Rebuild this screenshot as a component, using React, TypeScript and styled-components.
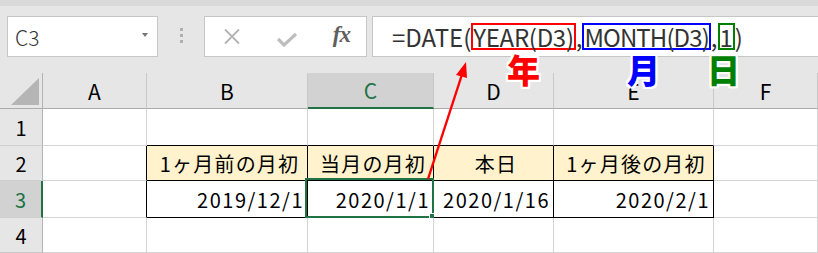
import React from "react";
import styled, { createGlobalStyle } from "styled-components";

const GREEN = "#217346";
const GRID = "#d4d4d4";
const INK = "#000";

const GlobalStyle = createGlobalStyle`
  html, body {
    margin: 0;
    padding: 0;
    background: #e6e6e6;
    overflow: hidden;
  }
  body {
    font-family: "Noto Sans CJK JP", "Noto Sans", sans-serif;
  }
`;

const Frame = styled.div`
  position: relative;
  width: 818px;
  height: 253px;
  overflow: hidden;
  background: #e6e6e6;
`;

const TopEdge = styled.div`
  height: 6px;
  background: #d9d9d9;
`;

const FormulaBar = styled.div`
  display: flex;
  align-items: center;
  height: 41px;
  padding: 10px 0 16px 7px;
`;

const Box = styled.div`
  box-sizing: border-box;
  height: 41px;
  background: #fff;
  border: 1px solid #c6c6c6;
  display: flex;
  align-items: center;
`;

const NameBox = styled(Box)`
  width: 151px;
  padding: 0 9px 0 7px;
  justify-content: space-between;
  font-size: 21px;
  font-weight: 300;
  color: #333;
`;

const DropArrow = styled.span`
  width: 0;
  height: 0;
  border-left: 3.5px solid transparent;
  border-right: 3.5px solid transparent;
  border-top: 4px solid #777;
  margin-top: -4px;
`;

const Grip = styled.div`
  width: 46px;
  display: flex;
  flex-direction: column;
  align-items: center;
  gap: 3px;
  margin-top: -2px;

  span {
    width: 3px;
    height: 3px;
    background: #b0b0b0;
  }
`;

const ButtonBox = styled(Box)`
  width: 163px;
  padding: 0 16px 0 18px;
  justify-content: space-between;
`;

const Fx = styled.span`
  font-family: "Liberation Serif", serif;
  font-style: italic;
  font-weight: bold;
  font-size: 23px;
  color: #5f5f5f;
  letter-spacing: -1px;
  margin-top: -4px;
`;

const FormulaBox = styled(Box)`
  flex: 1;
  margin-left: 5px;
  margin-right: -10px;
  padding-left: 19px;
  font-size: 24px;
  color: #333;
  white-space: nowrap;
`;

const Mark = styled.span<{ $c: string; $ls?: number }>`
  display: inline-block;
  border: 2px solid ${(p) => p.$c};
  line-height: 23px;
  letter-spacing: ${(p) => p.$ls ?? 0}px;
`;

const Sheet = styled.div`
  display: grid;
  grid-template-columns: 43px 104px 161px 126px 120px 160px 1fr;
  grid-template-rows: 36px 37px 35px 37px 35px;
  background: #fff;
`;

const Cell = styled.div<{
  $bg?: string;
  $align?: string;
  $right?: string;
  $bottom?: string;
  $num?: boolean;
}>`
  position: relative;
  box-sizing: border-box;
  display: flex;
  align-items: center;
  justify-content: ${(p) => p.$align || "flex-start"};
  padding: 0 3px 0 8px;
  background: ${(p) => p.$bg || "#fff"};
  border-right: 1px solid ${(p) => p.$right || GRID};
  border-bottom: 1px solid ${(p) => p.$bottom || GRID};
  font-size: 20px;
  letter-spacing: ${(p) => (p.$num ? 1.5 : 1.2)}px;
  color: #000;
  white-space: nowrap;
`;

const Head = styled.div<{ $sel?: boolean; $row?: boolean; $last?: boolean }>`
  position: relative;
  box-sizing: border-box;
  display: flex;
  align-items: center;
  justify-content: center;
  background: ${(p) => (p.$sel ? "#d2d2d2" : "#e6e6e6")};
  color: ${(p) => (p.$sel ? GREEN : "#000")};
  font-size: ${(p) => (p.$row ? 20 : 21)}px;
  border-right: ${(p) =>
    p.$row
      ? p.$sel
        ? `2px solid ${GREEN}`
        : "1px solid #b4b4b4"
      : "1px solid #c8c8c8"};
  border-bottom: ${(p) =>
    p.$row
      ? `1px solid ${p.$last ? "#c8c8c8" : "#cfcfcf"}`
      : p.$sel
      ? `2px solid ${GREEN}`
      : "1px solid #ababab"};
`;

const Corner = styled.div`
  box-sizing: border-box;
  display: flex;
  align-items: flex-end;
  justify-content: flex-end;
  padding: 0 3px 3px 0;
  background: #e6e6e6;
  border-right: 1px solid #b4b4b4;
  border-bottom: 1px solid #ababab;

  &::after {
    content: "";
    width: 28px;
    height: 27px;
    background: #b5b5b5;
    clip-path: polygon(100% 0, 100% 100%, 0 100%);
  }
`;

const Selection = styled.div`
  position: absolute;
  left: -3px;
  top: -3px;
  right: -1px;
  bottom: -1px;
  border: 2px solid ${GREEN};
  pointer-events: none;
`;

const Handle = styled.div`
  position: absolute;
  right: -5px;
  bottom: -5px;
  width: 6px;
  height: 6px;
  background: ${GREEN};
  border: 1px solid #fff;
`;

const Overlay = styled.svg`
  position: absolute;
  left: 0;
  top: 0;
  pointer-events: none;
`;

const Note = styled.span<{ $c: string; $x: number }>`
  position: absolute;
  top: 55px;
  left: ${(p) => p.$x}px;
  font-size: 33px;
  font-weight: 900;
  line-height: 28px;
  color: ${(p) => p.$c};
  text-shadow: 2px 0 #fff, -2px 0 #fff, 0 2px #fff, 0 -2px #fff,
    2px 2px #fff, -2px -2px #fff, 2px -2px #fff, -2px 2px #fff;
`;

const cols = ["A", "B", "C", "D", "E", "F"];

export default function App() {
  const tableCol = (i: number) => i >= 1 && i <= 4;

  const row = (r: number) => {
    const cells = cols.map((c, i) => {
      const inTable = (r === 2 || r === 3) && tableCol(i);
      let right = GRID;
      let bottom = GRID;
      if (inTable) {
        right = INK;
        bottom = INK;
      }
      if (i === 0 && (r === 2 || r === 3)) right = INK;
      if (r === 1 && tableCol(i)) bottom = INK;

      let content: React.ReactNode = null;
      let bg: string | undefined;
      let align: string | undefined;
      if (r === 2 && inTable) {
        bg = "#fff2cc";
        align = "center";
        content = ["1ヶ月前の月初", "当月の月初", "本日", "1ヶ月後の月初"][i - 1];
      }
      if (r === 3 && inTable) {
        align = "flex-end";
        content = ["2019/12/1", "2020/1/1", "2020/1/16", "2020/2/1"][i - 1];
      }
      return (
        <Cell
          key={c + r}
          $bg={bg}
          $align={align}
          $right={right}
          $bottom={bottom}
          $num={r === 3}
        >
          {content}
          {r === 3 && c === "C" && (
            <Selection>
              <Handle />
            </Selection>
          )}
        </Cell>
      );
    });
    return [
      <Head key={"h" + r} $row $sel={r === 3} $last={r === 4}>
        {r}
      </Head>,
      ...cells,
    ];
  };

  return (
    <Frame>
      <GlobalStyle />
      <TopEdge />
      <FormulaBar>
        <NameBox>
          <span>C3</span>
          <DropArrow />
        </NameBox>
        <Grip>
          <span />
          <span />
          <span />
        </Grip>
        <ButtonBox>
          <svg width="18" height="17" viewBox="0 0 18 17">
            <path d="M2 1.5 L16 15.5 M16 1.5 L2 15.5" stroke="#b3b3b3" strokeWidth="1.8" fill="none" />
          </svg>
          <svg width="20" height="14" viewBox="0 0 20 14" style={{ marginTop: 6 }}>
            <path d="M1 6 L7 12 L19 1" stroke="#bdbdbd" strokeWidth="3.2" fill="none" />
          </svg>
          <Fx>fx</Fx>
        </ButtonBox>
        <FormulaBox>
          =DATE(<Mark $c="#ff0000" $ls={-0.3}>YEAR(D3)</Mark>,<Mark $c="#0000ff" $ls={-0.9}>MONTH(D3)</Mark>,<Mark $c="#008000">1</Mark>)
        </FormulaBox>
      </FormulaBar>
      <Sheet>
        <Corner />
        {cols.map((c) => (
          <Head key={c} $sel={c === "C"}>
            {c}
          </Head>
        ))}
        {[1, 2, 3, 4].map((r) => row(r))}
      </Sheet>
      <Overlay width="818" height="253" viewBox="0 0 818 253">
        <line x1="428" y1="179" x2="461.5" y2="76" stroke="#ff0000" strokeWidth="2.4" />
        <polygon points="466,62 467,78 456,75" fill="#ff0000" />
      </Overlay>
      <Note $c="#ff0000" $x={507}>年</Note>
      <Note $c="#0000ff" $x={627}>月</Note>
      <Note $c="#008000" $x={707}>日</Note>
    </Frame>
  );
}
